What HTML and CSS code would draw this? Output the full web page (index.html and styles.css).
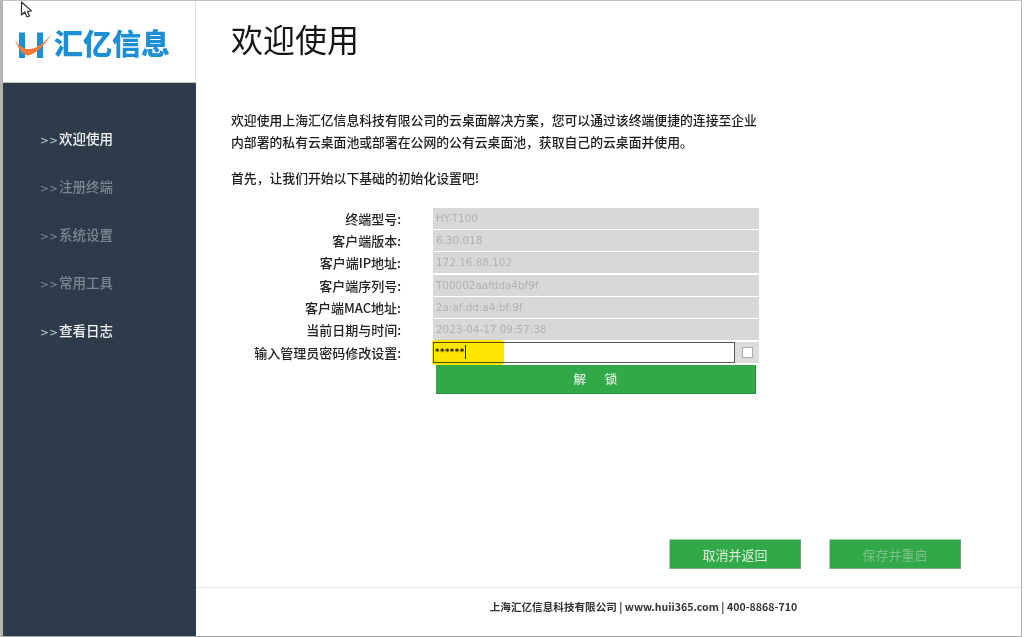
FILE: index.html
```html
<!DOCTYPE html>
<html lang="zh-CN">
<head>
<meta charset="utf-8">
<title>欢迎使用</title>
<link rel="stylesheet" href="styles.css">
</head>
<body>
<div class="window">
  <aside class="sidebar">
    <div class="logo">
      <svg class="mark" width="38" height="30" viewBox="0 0 38 30"><rect x="4" y="4.500" width="6" height="25.500" fill="#1d8fd6"/><rect x="22" y="4.500" width="6" height="25.500" fill="#1d8fd6"/><path d="M0 12.500C4 18 9 21.500 15 21C23 20.500 31 13 37 5.500C31 15 22 26 13 27.500C7 27 3 19 0 12.500Z" fill="#f07c35"/></svg>
      <span class="logo-text">汇亿信息</span>
    </div>
    <nav class="nav">
      <div class="nav-item active"><span class="arrows">&gt;&gt;</span>欢迎使用</div>
      <div class="nav-item"><span class="arrows">&gt;&gt;</span>注册终端</div>
      <div class="nav-item"><span class="arrows">&gt;&gt;</span>系统设置</div>
      <div class="nav-item"><span class="arrows">&gt;&gt;</span>常用工具</div>
      <div class="nav-item active"><span class="arrows">&gt;&gt;</span>查看日志</div>
    </nav>
  </aside>
  <main class="main">
    <div class="content">
      <h1 class="title">欢迎使用</h1>
      <p class="intro">欢迎使用上海汇亿信息科技有限公司的云桌面解决方案，您可以通过该终端便捷的连接至企业<br>内部署的私有云桌面池或部署在公网的公有云桌面池，获取自己的云桌面并使用。</p>
      <p class="intro lead">首先，让我们开始以下基础的初始化设置吧!</p>
      <div class="form">
        <div class="row"><label class="label">终端型号:</label><div class="field">HY-T100</div></div>
        <div class="row"><label class="label">客户端版本:</label><div class="field">6.30.018</div></div>
        <div class="row"><label class="label">客户端IP地址:</label><div class="field">172.16.88.102</div></div>
        <div class="row"><label class="label">客户端序列号:</label><div class="field">T00002aafdda4bf9f</div></div>
        <div class="row"><label class="label">客户端MAC地址:</label><div class="field">2a:af:dd:a4:bf:9f</div></div>
        <div class="row"><label class="label">当前日期与时间:</label><div class="field">2023-04-17 09:57:38</div></div>
        <div class="row">
          <label class="label">输入管理员密码修改设置:</label>
          <div class="pw-wrap">
            <div class="pw-input"><span class="stars">******</span><span class="caret"></span><span class="marker"></span></div>
            <div class="pw-toggle"><span class="check"></span></div>
          </div>
        </div>
        <button class="unlock">解&emsp;&ensp;锁</button>
      </div>
    </div>
    <div class="actions">
      <button class="btn">取消并返回</button>
      <button class="btn disabled">保存并重启</button>
    </div>
    <footer class="footer">上海汇亿信息科技有限公司 | www.huii365.com | 400-8868-710</footer>
  </main>
</div>
<svg class="cursor" width="14" height="18" viewBox="0 0 14 18"><path d="M1.500 1V14L4.800 11L7 16L9.500 15L7.300 10.300L11.500 10Z" fill="#fff" stroke="#333" stroke-width="1.200" stroke-linejoin="round"/></svg>
</body>
</html>
```
FILE: styles.css
```css
* { box-sizing: border-box; }
html, body { margin: 0; height: 100%; }
body {
  width: 1024px;
  height: 637px;
  overflow: hidden;
  background: #fff;
  font-family: "Liberation Sans", "Noto Sans CJK SC", sans-serif;
  position: relative;
}
.window {
  width: 1022px;
  height: 637px;
  display: flex;
  border-left: 3px solid #b4b4b4;
  border-top: 1px solid #c4c4c4;
  border-right: 1px solid #b0b0b0;
  border-bottom: 1px solid #a8a8a8;
}
.sidebar {
  width: 193px;
  flex: none;
  display: flex;
  flex-direction: column;
}
.logo {
  height: 81px;
  flex: none;
  background: #fff;
  border-right: 1px solid #e4e4e4;
  display: flex;
  align-items: center;
  padding: 2px 0 0 12px;
  gap: 1px;
}
.mark { flex: none; }
.logo-text {
  font-family: "Noto Sans CJK SC", sans-serif;
  font-size: 29px;
  font-weight: 900;
  color: #1d8fd6;
  line-height: 1;
}
.nav {
  flex: 1;
  background: #2d3b4a;
  border-top: 1px solid #c8c8c8;
  padding-top: 31px;
}
.nav-item {
  height: 48px;
  display: flex;
  align-items: center;
  padding-left: 37px;
  font-size: 13.500px;
  font-weight: 500;
  font-family: "Noto Sans CJK SC", sans-serif;
  color: #7d8792;
}
.nav-item.active { color: #f2f4f5; }
.arrows {
  width: 19px;
  margin-top: 3px;
  font-family: "DejaVu Sans", sans-serif;
  font-size: 10.500px;
  letter-spacing: 0.500px;
  color: #7d8a96;
}
.nav-item.active .arrows { color: #c5ccd2; }
.main {
  flex: 1;
  display: flex;
  flex-direction: column;
  min-width: 0;
}
.content {
  flex: 1;
  padding-left: 35px;
}
.title {
  margin: 15px 0 0;
  font-family: "Noto Sans CJK SC", sans-serif;
  font-size: 32px;
  font-weight: 400;
  line-height: 44px;
  color: #151515;
}
.intro {
  margin: 49px 0 0;
  font-family: "Noto Sans CJK SC", sans-serif;
  font-size: 12.830px;
  font-weight: 500;
  line-height: 21.500px;
  color: #1c1c1c;
  white-space: nowrap;
}
.lead { margin-top: 15px; }
.form {
  margin-top: 19px;
  display: flex;
  flex-direction: column;
  gap: 1.400px;
}
.row {
  display: flex;
  height: 21px;
  align-items: center;
}
.label {
  width: 170px;
  flex: none;
  text-align: right;
  font-family: "Noto Sans CJK SC", sans-serif;
  font-size: 13px;
  font-weight: 500;
  color: #222;
  white-space: nowrap;
}
.field {
  margin-left: 32px;
  width: 326px;
  height: 21px;
  background: #d8d8d8;
  color: #b1b1b1;
  font-size: 10.400px;
  font-family: "DejaVu Sans", sans-serif;
  line-height: 21px;
  padding-left: 3px;
}
.pw-wrap {
  margin-left: 32px;
  width: 326px;
  height: 21px;
  display: flex;
  background: #dcdcdc;
}
.pw-input {
  width: 302px;
  height: 21px;
  flex: none;
  border: 1px solid #555;
  border-width: 1.500px 1px;
  background: #fff;
  position: relative;
  display: flex;
  align-items: center;
  padding-left: 1px;
}
.marker {
  position: absolute;
  left: -2px;
  top: -3px;
  width: 72px;
  height: 25px;
  background: #ffe400;
  border-radius: 3px;
  mix-blend-mode: multiply;
}
.stars {
  font-family: "DejaVu Sans", sans-serif;
  font-size: 8.500px;
  font-weight: 700;
  letter-spacing: 0.500px;
  color: #111;
  line-height: 1;
}
.caret {
  width: 1px;
  height: 14px;
  background: #111;
}
.pw-toggle {
  flex: 1;
  display: flex;
  align-items: center;
  justify-content: center;
}
.check {
  width: 11px;
  height: 11px;
  background: #fff;
  border: 1px solid #aaa;
}
.unlock {
  margin: 0.600px 0 0 205px;
  width: 320px;
  height: 29px;
  background: #32a948;
  border: 0;
  border-bottom: 1px solid #2b8f3e;
  border-right: 1px solid #2b8f3e;
  color: #dcefdc;
  font-family: "Noto Sans CJK SC", sans-serif;
  font-size: 12.500px;
  font-weight: 500;
  padding: 0;
}
.actions {
  height: 48px;
  flex: none;
  display: flex;
  gap: 28px;
  padding-left: 473px;
}
.btn {
  width: 132px;
  height: 30px;
  background: #32a948;
  border: 1px solid #a3d9ae;
  border-right-color: #6d9f78;
  border-bottom-color: #7cae87;
  color: #dcefdc;
  font-family: "Noto Sans CJK SC", sans-serif;
  font-size: 13px;
  font-weight: 400;
  padding: 0;
}
.btn.disabled { color: #7fbf8a; }
.footer {
  height: 49px;
  flex: none;
  border-top: 1px solid #e8e8e8;
  display: flex;
  align-items: center;
  justify-content: center;
  padding: 0 0 12px 70px;
  font-family: "Noto Sans CJK SC", sans-serif;
  font-size: 10.600px;
  font-weight: 700;
  color: #333;
}
.cursor {
  position: absolute;
  left: 20px;
  top: 1px;
}
```
